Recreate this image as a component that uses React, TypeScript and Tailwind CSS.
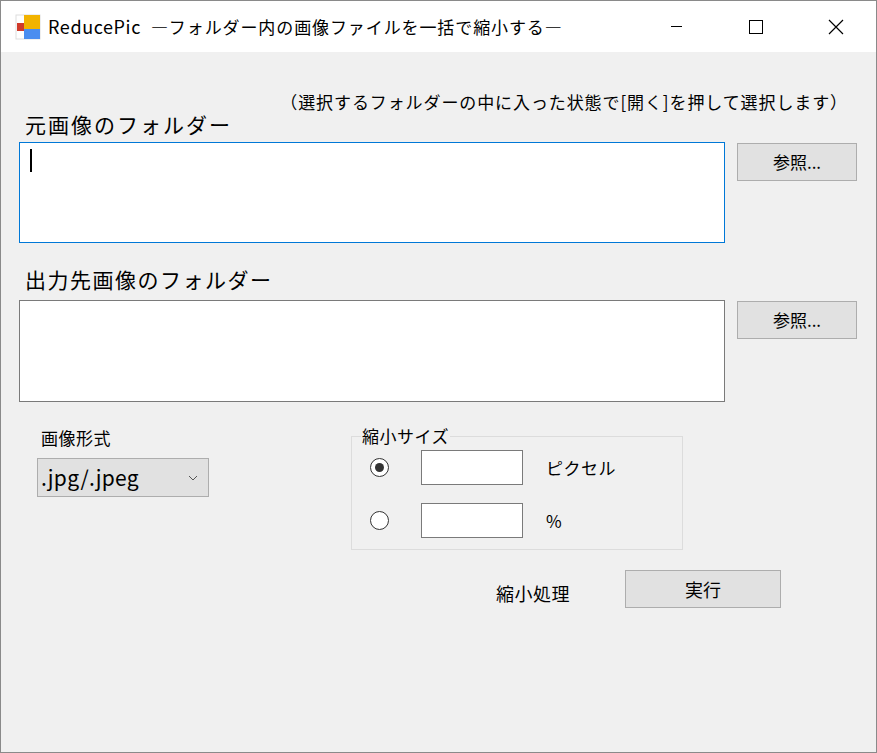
const font = { fontFamily: '"Noto Sans CJK JP", "Noto Sans", sans-serif' };

function Radio({ checked }: { checked?: boolean }) {
  return (
    <span className="flex h-[19px] w-[19px] items-center justify-center rounded-full border border-[#333] bg-white">
      {checked ? <span className="h-[9px] w-[9px] rounded-full bg-[#333]" /> : null}
    </span>
  );
}

function RefButton() {
  return (
    <button className="mt-px h-[38px] w-[120px] border border-[#adadad] bg-[#e1e1e1] text-[17px] text-black">
      参照...
    </button>
  );
}

export default function App() {
  return (
    <div className="h-[753px] w-[877px] overflow-hidden border border-[#8a8a8a] bg-[#f0f0f0] text-black" style={font}>
      {/* title bar */}
      <div className="flex h-[51px] items-center bg-white">
        <svg width="26" height="26" viewBox="0 0 26 26" className="ml-[14px]">
          <rect x="1" y="1" width="24" height="24" fill="#fff" stroke="#ddd" />
          <rect x="9" y="1" width="16" height="14" fill="#f2b300" />
          <rect x="2" y="9" width="7" height="8" fill="#d03a2a" />
          <rect x="9" y="15" width="16" height="10" fill="#4a8df0" />
        </svg>
        <span className="ml-[7px] text-[18px] tracking-[0.6px]">ReducePic</span>
        <span className="ml-[10px] text-[17px] tracking-[0.9px]">―フォルダー内の画像ファイルを一括で縮小する―</span>
        <div className="ml-auto flex h-full">
          <div className="flex w-[80px] items-center justify-center">
            <span className="h-px w-[11px] bg-black" />
          </div>
          <div className="flex w-[80px] items-center justify-center">
            <span className="h-[14px] w-[14px] border border-black" />
          </div>
          <div className="flex w-[80px] items-center justify-center">
            <svg width="16" height="16" viewBox="0 0 16 16" stroke="black" strokeWidth="1.2">
              <path d="M1 1L15 15M15 1L1 15" />
            </svg>
          </div>
        </div>
      </div>

      <div className="px-[18px]">
        <div className="mt-[38px] pr-[10px] text-right text-[17px] leading-[24px] tracking-[0.9px]">（選択するフォルダーの中に入った状態で[開く]を押して選択します）</div>
        <div className="ml-[6px] -mt-[4px] text-[21px] leading-[28px] tracking-[2px]">元画像のフォルダー</div>
        <div className="mt-[4px] flex gap-[12px]">
          <div className="h-[101px] w-[706px] border border-[#0078d7] bg-white pl-[10px] pt-[6px]">
            <span className="block h-[23px] w-[2px] bg-black" />
          </div>
          <RefButton />
        </div>
        <div className="ml-[6px] mt-[22px] text-[21px] leading-[28px] tracking-[1.5px]">出力先画像のフォルダー</div>
        <div className="mt-[7px] flex gap-[12px]">
          <div className="h-[102px] w-[706px] border border-[#7a7a7a] bg-white" />
          <RefButton />
        </div>

        <div className="mt-[24px] flex">
          <div className="ml-[18px] w-[314px]">
            <div className="ml-[4px] text-[17px] leading-[24px] tracking-[0.5px]">画像形式</div>
            <div className="mt-[8px] flex h-[39px] w-[172px] items-center justify-between border border-[#adadad] bg-[#e1e1e1] pl-[3px] pr-[10px]">
              <span className="text-[21px] tracking-[0.3px]">.jpg/.jpeg</span>
              <svg width="10" height="6" viewBox="0 0 10 6" fill="none" stroke="#555">
                <path d="M1 1L5 5L9 1" />
              </svg>
            </div>
          </div>
          <fieldset className="h-[124px] w-[332px] border border-[#dcdcdc] pl-[18px]">
            <legend className="-ml-[9px] px-[1px] text-[17px] leading-[20px] tracking-[0.5px]">縮小サイズ</legend>
            <div className="mt-[4px] flex items-center">
              <Radio checked />
              <span className="ml-[32px] h-[35px] w-[102px] border border-[#7a7a7a] bg-white" />
              <span className="ml-[23px] text-[17px] tracking-[0.5px]">ピクセル</span>
            </div>
            <div className="mt-[18px] flex items-center">
              <Radio />
              <span className="ml-[32px] h-[35px] w-[102px] border border-[#7a7a7a] bg-white" />
              <span className="ml-[23px] text-[17px]">%</span>
            </div>
          </fieldset>
        </div>

        <div className="mt-[20px] flex items-center">
          <span className="ml-[477px] mt-[8px] text-[18px] tracking-[0.5px]">縮小処理</span>
          <button className="ml-[55px] h-[38px] w-[156px] border border-[#adadad] bg-[#e1e1e1] text-[18px]">実行</button>
        </div>
      </div>
    </div>
  );
}
